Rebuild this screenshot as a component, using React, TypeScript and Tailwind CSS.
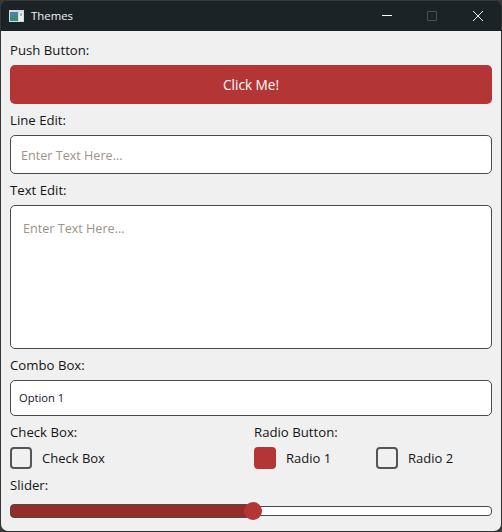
export default function App() {
  const labelCls = "h-4 mb-[7px] flex items-center text-[13.2px] leading-4 text-[#141414]";
  return (
    <div className="w-[502px] h-[532px] bg-[#3a3a3a] font-['Open_Sans','Liberation_Sans',sans-serif]">
      <div className="w-full h-full flex flex-col rounded-lg overflow-hidden border-l border-r border-b border-[#333333] border-t-0">
        <div className="h-[31px] shrink-0 bg-[#1b2326] border-t border-[#3a3a3a] flex items-center">
          <svg width="15" height="12" viewBox="0 0 15 12" className="ml-[8px] mr-[7px]">
            <rect x="0" y="0" width="15" height="12" fill="#d4dcdc" />
            <rect x="1" y="2" width="8" height="9" fill="#3c8a86" />
            <rect x="1" y="2" width="8" height="4" fill="#4a82a8" />
            <rect x="10" y="2" width="4" height="9" fill="#e6eeee" />
            <rect x="11" y="3" width="2" height="3" fill="#8fc0a8" />
          </svg>
          <span className="text-[11.4px] text-[#f2f2f2]">Themes</span>
          <div className="ml-auto flex items-center pr-[18px] -mt-px">
            <div className="w-[10px] h-px bg-white mr-[35px]" />
            <div className="w-[10px] h-[10px] rounded-[1px] border border-[#4b5052] mr-[36px]" />
            <svg width="10" height="10" viewBox="0 0 10 10">
              <path d="M0 0 L10 10 M10 0 L0 10" stroke="#f4f4f4" strokeWidth="1" />
            </svg>
          </div>
        </div>
        <div className="flex-1 bg-[#f0f0f0] px-[9px] pt-[11px] flex flex-col gap-2">
          <div>
            <div className={labelCls}>Push Button:</div>
            <button className="w-full h-[39px] pt-[2px] rounded-[5px] bg-[#b43535] text-white text-[13.6px]">Click Me!</button>
          </div>
          <div>
            <div className={labelCls}>Line Edit:</div>
            <div className="h-[39px] pt-[3px] rounded-[5px] border border-[#4a4a4a] bg-white flex items-center pl-[10px] text-[12.6px] text-[#9c948a]">Enter Text Here...</div>
          </div>
          <div>
            <div className={labelCls}>Text Edit:</div>
            <div className="h-[144px] rounded-[5px] border border-[#4a4a4a] bg-white pl-[12px] pt-[14px] text-[12.6px] leading-[18px] text-[#9c948a]">Enter Text Here...</div>
          </div>
          <div>
            <div className={labelCls}>Combo Box:</div>
            <div className="h-[36px] rounded-[5px] border border-[#4a4a4a] bg-white flex items-center pl-[8px] text-[11.2px] text-[#14141f]">Option 1</div>
          </div>
          <div className="grid grid-cols-2 gap-[6px]">
            <div>
              <div className={labelCls}>Check Box:</div>
              <div className="flex items-center gap-[10px] h-[22px] text-[13px] text-[#141414]">
                <div className="w-[22px] h-[22px] rounded-[4px] border-2 border-[#555555]" />
                <span className="pt-[2px]">Check Box</span>
              </div>
            </div>
            <div>
              <div className={labelCls}>Radio Button:</div>
              <div className="grid grid-cols-2 gap-[6px] text-[13px] text-[#141414]">
                <div className="flex items-center gap-[10px] h-[22px]">
                  <div className="w-[22px] h-[22px] rounded-[4px] bg-[#b43535]" />
                  <span className="pt-[2px]">Radio 1</span>
                </div>
                <div className="flex items-center gap-[10px] h-[22px]">
                  <div className="w-[22px] h-[22px] rounded-[4px] border-2 border-[#555555]" />
                  <span className="pt-[2px]">Radio 2</span>
                </div>
              </div>
            </div>
          </div>
          <div>
            <div className={labelCls}>Slider:</div>
            <div className="relative h-[22px] flex items-center">
              <div className="w-full h-[10px] rounded-[4px] border border-[#4a4a4a] bg-white" />
              <div className="absolute left-0 top-[4px] w-[240px] h-[14px] rounded-[4px] border border-[#4a4a4a] bg-[#952b2b]" />
              <div className="absolute left-[234px] top-[2px] w-[18px] h-[18px] rounded-full bg-[#b43535]" />
            </div>
          </div>
        </div>
      </div>
    </div>
  );
}
